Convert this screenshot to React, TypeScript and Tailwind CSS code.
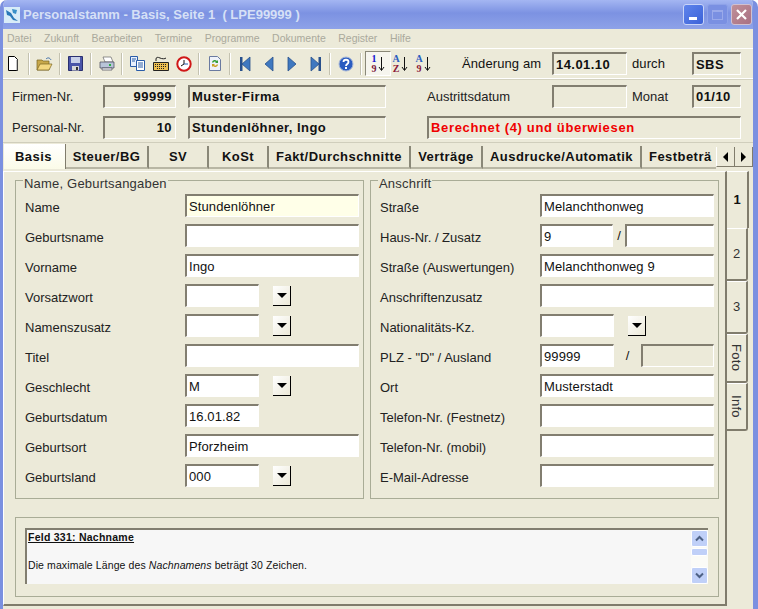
const FONT = "font-['Liberation_Sans',Arial,sans-serif]";

function Field({
  value,
  w,
  bold,
  white,
  className = "",
}: {
  value?: string;
  w: string;
  bold?: boolean;
  white?: boolean;
  className?: string;
}) {
  return (
    <div
      className={`${w} h-[23px] flex items-center pl-[2px] border-t-2 border-l-2 border-t-[#827e70] border-l-[#827e70] border-b border-r border-b-white border-r-white text-[13px] leading-none overflow-hidden whitespace-nowrap ${
        white ? "bg-white" : ""
      } ${bold ? "font-bold tracking-[0.45px]" : "tracking-[0.1px]"} ${className}`}
    >
      {value}
    </div>
  );
}

function DropBtn() {
  return (
    <div className="ml-[14px] w-[18px] h-[20px] mt-[1px] flex items-center justify-center bg-linear-to-br from-white to-[#ece9d8] border-r border-b border-r-black border-b-black">
      <div className="w-0 h-0 border-l-[5px] border-r-[5px] border-t-[5px] border-l-transparent border-r-transparent border-t-black" />
    </div>
  );
}

type Row = {
  label: string;
  value?: string;
  kind?: "wide" | "short" | "drop" | "yellow" | "haus" | "plz";
};

const leftRows: Row[] = [
  { label: "Name", value: "Stundenlöhner", kind: "yellow" },
  { label: "Geburtsname" },
  { label: "Vorname", value: "Ingo" },
  { label: "Vorsatzwort", kind: "drop" },
  { label: "Namenszusatz", kind: "drop" },
  { label: "Titel" },
  { label: "Geschlecht", value: "M", kind: "drop" },
  { label: "Geburtsdatum", value: "16.01.82", kind: "short" },
  { label: "Geburtsort", value: "Pforzheim" },
  { label: "Geburtsland", value: "000", kind: "drop" },
];

const rightRows: Row[] = [
  { label: "Straße", value: "Melanchthonweg" },
  { label: "Haus-Nr. / Zusatz", value: "9", kind: "haus" },
  { label: "Straße (Auswertungen)", value: "Melanchthonweg 9" },
  { label: "Anschriftenzusatz" },
  { label: "Nationalitäts-Kz.", kind: "drop" },
  { label: 'PLZ - "D" / Ausland', value: "99999", kind: "plz" },
  { label: "Ort", value: "Musterstadt" },
  { label: "Telefon-Nr. (Festnetz)" },
  { label: "Telefon-Nr. (mobil)" },
  { label: "E-Mail-Adresse" },
];

function FormRow({ row }: { row: Row }) {
  const kind = row.kind ?? "wide";
  return (
    <div className="flex h-[23px] items-center">
      <div className="w-[160px] pt-[5px] text-[13px] text-[#222] whitespace-nowrap">{row.label}</div>
      {kind === "wide" && <Field w="w-[174px]" value={row.value} white />}
      {kind === "yellow" && <Field w="w-[174px]" value={row.value} className="bg-[#ffffe8]" />}
      {kind === "short" && <Field w="w-[74px]" value={row.value} white />}
      {kind === "drop" && (
        <>
          <Field w="w-[74px]" value={row.value} white />
          <DropBtn />
        </>
      )}
      {kind === "haus" && (
        <>
          <Field w="w-[73px]" value={row.value} white />
          <span className="w-[12px] text-center text-[13px]">/</span>
          <Field w="w-[89px]" white />
        </>
      )}
      {kind === "plz" && (
        <>
          <Field w="w-[74px]" value={row.value} white />
          <span className="w-[27px] text-center text-[13px]">/</span>
          <Field w="w-[73px]" />
        </>
      )}
    </div>
  );
}

function Group({ title, rows, className }: { title: string; rows: Row[]; className: string }) {
  return (
    <div className={`relative h-[319px] border border-[#a9ac96] pl-[9px] pt-[13px] flex flex-col gap-[7px] ${className}`}>
      <div className="absolute left-[7px] -top-[5px] bg-[#ecead9] px-[1px] text-[13px] leading-[15px] tracking-[0.2px] text-[#333]">
        {title}
      </div>
      {rows.map((r) => (
        <FormRow key={r.label} row={r} />
      ))}
    </div>
  );
}

const tabs = [
  { label: "Steuer/BG", w: "w-[83px]" },
  { label: "SV", w: "w-[60px]" },
  { label: "KoSt", w: "w-[60px]" },
  { label: "Fakt/Durchschnitte", w: "w-[142px]" },
  { label: "Verträge", w: "w-[72px]" },
  { label: "Ausdrucke/Automatik", w: "w-[159px]" },
];

function Sep() {
  return <div className="mx-[3px] w-[2px] h-[22px] bg-[#c4c2b0] border-r border-r-white" />;
}

function Btn({ children }: { children: React.ReactNode }) {
  return <div className="w-[23px] h-[24px] flex items-center justify-center">{children}</div>;
}

function Nav({ dir, bar }: { dir: "l" | "r"; bar?: boolean }) {
  return (
    <svg width="12" height="16" viewBox="0 0 12 16">
      {dir === "l" ? (
        <path d="M10 1v14L2 8z" fill="#3f78c0" stroke="#28508c" strokeWidth="0.8" />
      ) : (
        <path d="M2 1v14l8-7z" fill="#3f78c0" stroke="#28508c" strokeWidth="0.8" />
      )}
      {bar && <rect x={dir === "l" ? 0 : 9.5} y="1" width="2.5" height="14" fill="#28508c" />}
    </svg>
  );
}

function SortIcon({ top, bottom, topColor, botColor }: { top: string; bottom: string; topColor: string; botColor: string }) {
  return (
    <div className="flex items-center">
      <div className="flex flex-col items-center text-[10px] leading-[10px] font-bold font-['Liberation_Serif',serif]">
        <span style={{ color: topColor }}>{top}</span>
        <span style={{ color: botColor }}>{bottom}</span>
      </div>
      <svg width="7" height="16" viewBox="0 0 7 16" className="ml-[1px]">
        <path d="M3.500 1v13M1 11l2.500 3.500L6 11" stroke="#111" fill="none" />
      </svg>
    </div>
  );
}

function Toolbar() {
  return (
    <div className="h-[30px] flex items-center border-b border-b-white">
      <div className="w-[19px] flex justify-center">
        <svg width="12" height="15" viewBox="0 0 12 15">
          <path d="M1.500.5h6l3 3v11h-9z" fill="#fff" stroke="#000" />
          <path d="M10 14.500V4" stroke="#8a8a8a" />
        </svg>
      </div>
      <div className="ml-[3px]" />
      <Sep />
      <Btn>
        <svg width="17" height="14" viewBox="0 0 17 14">
          <path d="M1 3h5l1 1h6v9H1z" fill="#c8a84a" stroke="#7a6420" strokeWidth="0.7" />
          <path d="M1 13l3-6h12l-3 6z" fill="#f4d880" stroke="#7a6420" strokeWidth="0.7" />
          <path d="M10 2c2-2 4-1 5 1" stroke="#3c6ca8" fill="none" />
        </svg>
      </Btn>
      <Sep />
      <Btn>
        <svg width="15" height="15" viewBox="0 0 15 15">
          <path d="M.5.5h14v14H.5z" fill="#4a55a8" stroke="#2a3070" />
          <rect x="3" y="1" width="9" height="6" fill="#c8d0e8" />
          <rect x="4" y="10" width="7" height="4.500" fill="#d8d8d8" />
          <rect x="8" y="11" width="2" height="3" fill="#333" />
        </svg>
      </Btn>
      <Sep />
      <Btn>
        <svg width="16" height="15" viewBox="0 0 16 15">
          <path d="M4 1h8l2 5H6z" fill="#fff" stroke="#666" strokeWidth="0.7" />
          <path d="M1 6h14v6H1z" fill="#b8c4d8" stroke="#445" strokeWidth="0.7" />
          <path d="M3 12h10v2H3z" fill="#fff" stroke="#445" strokeWidth="0.7" />
          <rect x="10" y="8" width="2" height="2" fill="#28b040" />
        </svg>
      </Btn>
      <Sep />
      <Btn>
        <svg width="15" height="15" viewBox="0 0 15 15">
          <path d="M.5.5h7v10h-7z" fill="#e8f0fc" stroke="#2a5ca8" />
          <path d="M6.500 4.500h8v10h-8z" fill="#fff" stroke="#2a5ca8" />
          <path d="M8 7h5M8 9h5M8 11h5" stroke="#2a5ca8" />
          <path d="M2 3h4M2 5h3" stroke="#2a5ca8" />
        </svg>
      </Btn>
      <Btn>
        <svg width="16" height="15" viewBox="0 0 16 15">
          <path d="M3 5V3c0-2 2-2 4-1s5 1 6 0" stroke="#222" fill="none" />
          <path d="M.5 6.500h15v8H.5z" fill="#eec050" stroke="#222" />
          <path d="M2 8.500h12M2 10.500h12M4 12.500h8" stroke="#222" strokeDasharray="1 1" />
        </svg>
      </Btn>
      <Btn>
        <svg width="16" height="16" viewBox="0 0 16 16">
          <circle cx="8" cy="8" r="6.700" fill="#fff" stroke="#d01818" strokeWidth="2" />
          <path d="M8 4v4l-3 2" stroke="#111" fill="none" />
          <path d="M8 8h4" stroke="#2a5ca8" />
        </svg>
      </Btn>
      <Sep />
      <Btn>
        <svg width="12" height="15" viewBox="0 0 12 15">
          <path d="M.5.5h8l3 3v11H.5z" fill="#eef2fa" stroke="#6a7aa0" />
          <path d="M3 6a3 3 0 0 1 5-1l1-1v3H6l1-1a2 2 0 0 0-3 1z" fill="#38a038" />
          <path d="M9 9a3 3 0 0 1-5 1l-1 1V8h3l-1 1a2 2 0 0 0 3-1z" fill="#c8a020" />
        </svg>
      </Btn>
      <Sep />
      <Btn>
        <Nav dir="l" bar />
      </Btn>
      <Btn>
        <Nav dir="l" />
      </Btn>
      <Btn>
        <Nav dir="r" />
      </Btn>
      <Btn>
        <Nav dir="r" bar />
      </Btn>
      <Sep />
      <Btn>
        <svg width="16" height="16" viewBox="0 0 16 16">
          <circle cx="8" cy="8" r="7" fill="#2a5cc0" stroke="#a8b8d8" />
          <path d="M5.500 6c0-3 5-3 5 0 0 2-2.500 2-2.500 4" stroke="#fff" strokeWidth="1.800" fill="none" />
          <rect x="7" y="11" width="2" height="2" fill="#fff" />
        </svg>
      </Btn>
      <Sep />
      <div className="w-[26px] h-[25px] flex items-center justify-center border-t border-l border-t-[#8a8878] border-l-[#8a8878] border-b border-r border-b-white border-r-white bg-[#f6f5ee]">
        <SortIcon top="1" bottom="9" topColor="#1010d0" botColor="#7a1838" />
      </div>
      <div className="w-[18px] flex justify-center">
        <SortIcon top="A" bottom="Z" topColor="#2a5cc0" botColor="#8a1838" />
      </div>
      <div className="w-[28px] flex justify-center">
        <SortIcon top="A" bottom="9" topColor="#2a5cc0" botColor="#8a1838" />
      </div>
      <span className="ml-[25px] w-[90px] text-[13px] tracking-[0.1px] whitespace-nowrap">Änderung am</span>
      <Field w="w-[75px]" value="14.01.10" bold className="pl-[1px]" />
      <span className="ml-[5px] w-[60px] text-[13px] tracking-[0.1px]">durch</span>
      <Field w="w-[49px]" value="SBS" bold className="pl-[1px]" />
    </div>
  );
}

export default function App() {
  return (
    <div className={`${FONT} w-[758px] h-[609px] overflow-hidden bg-white text-[#111]`}>
      <div className="h-full bg-[#ecead9] border-l-[3px] border-r-[5px] border-l-[#7b90e0] border-r-[#7b90e0] rounded-t-[7px] overflow-hidden flex flex-col">
        {/* TITLE BAR */}
        <div className="h-[29px] shrink-0 -ml-[3px] -mr-[5px] flex items-center bg-[linear-gradient(to_bottom,#a4b6f2,#7c92e2_45%,#8ea2e8)] pl-[4px] pr-[6px]">
          <svg width="16" height="16" viewBox="0 0 16 16">
            <rect width="16" height="16" fill="#d8ecf8" />
            <path d="M2 3l5 3 3 5 4 3-5-1-3-4-3-1z" fill="#2a78b8" />
            <path d="M8 2l5 1-1 4-3-1z" fill="#3a90c8" />
          </svg>
          <span className="ml-[3px] text-[13px] font-bold text-[#d6e0f6] whitespace-pre">
            {"Personalstamm - Basis, Seite 1  ( LPE99999 )"}
          </span>
          <div className="ml-auto flex gap-[3px]">
            <div className="w-[21px] h-[21px] rounded-[3px] border border-[#c8d4f8] bg-linear-to-br from-[#5f84ec] to-[#3c62d8] flex items-end pl-[5px] pb-[4px]">
              <div className="w-[8px] h-[3px] bg-white" />
            </div>
            <div className="w-[21px] h-[21px] rounded-[3px] border border-[#8ea2e8] bg-[#7a90e2] flex items-center justify-center">
              <div className="w-[11px] h-[10px] border border-[#9aaaea] border-t-2" />
            </div>
            <div className="w-[21px] h-[21px] rounded-[3px] border border-[#d0c0d0] bg-linear-to-br from-[#c09098] to-[#a87084] flex items-center justify-center">
              <svg width="13" height="13" viewBox="0 0 13 13">
                <path d="M2 2l9 9M11 2l-9 9" stroke="#fff" strokeWidth="2.200" />
              </svg>
            </div>
          </div>
        </div>

        {/* MENU */}
        <div className="h-[20px] shrink-0 flex items-center gap-[12.500px] pl-[4px] text-[10.500px] text-[#aaa99c] border-b border-b-white">
          {["Datei", "Zukunft", "Bearbeiten", "Termine", "Programme", "Dokumente", "Register", "Hilfe"].map((m) => (
            <span key={m}>{m}</span>
          ))}
        </div>

        <Toolbar />

        {/* HEADER FIELDS */}
        <div className="h-[64px] shrink-0 pt-[5px] pl-[9px] flex flex-col gap-[8px] border-t border-t-[#d4d2c0] border-b border-b-[#d0cebc]">
          <div className="flex items-center h-[23px]">
            <span className="w-[91px] text-[13px] text-[#222]">Firmen-Nr.</span>
            <Field w="w-[73px]" value="99999" bold className="justify-end pr-[3px] pb-[2px]" />
            <Field w="w-[198px]" value="Muster-Firma" bold className="ml-[12px] pb-[2px]" />
            <span className="ml-[41px] w-[125px] text-[13px] text-[#222]">Austrittsdatum</span>
            <Field w="w-[75px]" />
            <span className="ml-[5px] w-[60px] text-[13px] text-[#222]">Monat</span>
            <Field w="w-[49px]" value="01/10" bold className="pl-[1px] pb-[2px]" />
          </div>
          <div className="flex items-center h-[23px]">
            <span className="w-[91px] text-[13px] text-[#222]">Personal-Nr.</span>
            <Field w="w-[73px]" value="10" bold className="justify-end pr-[3px] pb-[2px]" />
            <Field w="w-[198px]" value="Stundenlöhner, Ingo" bold className="ml-[12px] pb-[2px]" />
            <Field w="w-[314px]" value="Berechnet (4) und überwiesen" bold className="ml-[41px] pb-[2px] text-[#f00000] tracking-[0.65px]" />
          </div>
        </div>

        {/* TABS */}
        <div className="h-[28px] shrink-0 pt-[1px] flex items-start text-[13px] font-bold tracking-[0.45px]">
          <div className="w-[62px] h-[25px] ml-[1px] pl-[11px] flex items-center bg-linear-to-b from-white to-[#fbfbe8] border-r border-r-[#807c6c]">
            Basis
          </div>
          {tabs.map((t) => (
            <div key={t.label} className={`${t.w} h-[23px] mt-[2px] flex items-center justify-center border-r-2 border-b-2 border-r-[#8a8878] border-b-[#b8b6a4] whitespace-nowrap`}>
              {t.label}
            </div>
          ))}
          <div className="w-[74px] h-[23px] mt-[2px] pl-[7px] flex items-center overflow-hidden whitespace-nowrap border-b-2 border-b-[#b8b6a4]">
            Festbeträ
          </div>
          <div className="flex mt-[3px]">
            <div className="w-[19px] h-[20px] flex items-center justify-center border-r border-b border-r-[#807c6c] border-b-[#807c6c] border-l border-l-white">
              <div className="w-0 h-0 border-t-[5px] border-b-[5px] border-r-[5px] border-t-transparent border-b-transparent border-r-black" />
            </div>
            <div className="w-[18px] h-[20px] flex items-center justify-center border-r border-b border-r-[#807c6c] border-b-[#807c6c]">
              <div className="w-0 h-0 border-t-[5px] border-b-[5px] border-l-[5px] border-t-transparent border-b-transparent border-l-black" />
            </div>
          </div>
        </div>

        {/* BODY */}
        <div className="flex flex-1 min-h-0 items-start">
          <div className="w-[724px] h-[435px] shrink-0 border-t border-t-white border-l border-l-white border-r-2 border-r-[#807c6c] border-b-2 border-b-[#807c6c] pl-[11px] pt-[8px]">
            <div className="flex gap-[6px]">
              <Group title="Name, Geburtsangaben" rows={leftRows} className="w-[349px]" />
              <Group title="Anschrift" rows={rightRows} className="w-[349px]" />
            </div>
            <div className="mt-[18px] w-[704px] h-[80px] border border-[#a9ac96] pl-[9px] pt-[10px]">
              <div className="w-[683px] h-[56px] flex border-t-2 border-l-2 border-t-[#827e70] border-l-[#827e70] bg-[#f7f7f7]">
                <div className="flex-1 pl-[1px] text-[10.500px] leading-[12px] text-[#111]">
                  <div className="mt-[1px] font-bold underline tracking-[0.25px]">Feld 331: Nachname</div>
                  <div className="mt-[16px] tracking-[0.1px]">
                    Die maximale Länge des <em className="italic">Nachnamens</em> beträgt 30 Zeichen.
                  </div>
                </div>
                <div className="w-[17px] flex flex-col gap-[1px] bg-[#fbfbf7]">
                  <div className="h-[17px] rounded-[2px] border border-white bg-[#c0d0f8] flex items-center justify-center">
                    <svg width="9" height="7" viewBox="0 0 9 7">
                      <path d="M1 5.500l3.500-3.500L8 5.500" stroke="#4d6185" strokeWidth="2" fill="none" />
                    </svg>
                  </div>
                  <div className="h-[8px] rounded-[2px] border border-white bg-[#c0d0f8]" />
                  <div className="flex-1" />
                  <div className="h-[17px] rounded-[2px] border border-white bg-[#c0d0f8] flex items-center justify-center">
                    <svg width="9" height="7" viewBox="0 0 9 7">
                      <path d="M1 1.500L4.500 5 8 1.500" stroke="#4d6185" strokeWidth="2" fill="none" />
                    </svg>
                  </div>
                </div>
              </div>
            </div>
          </div>

          {/* SIDE TABS */}
          <div className="w-[23px] shrink-0 text-[13px] text-[#333]">
            <div className="h-[57px] w-[22px] flex items-center justify-center font-bold text-[#111] border-r-2 border-r-[#807c6c] border-t border-t-white">
              1
            </div>
            {[
              { label: "2", h: "h-[53px]", vertical: false },
              { label: "3", h: "h-[53px]", vertical: false },
              { label: "Foto", h: "h-[49px]", vertical: true },
              { label: "Info", h: "h-[48px]", vertical: true },
            ].map((t) => (
              <div key={t.label} className={`${t.h} w-[21px] flex items-center justify-center border-r-2 border-b-2 border-r-[#807c6c] border-b-[#807c6c] border-t border-t-white rounded-br-[3px]`}>
                <span className={t.vertical ? "[writing-mode:vertical-rl] tracking-[0.3px]" : ""}>{t.label}</span>
              </div>
            ))}
          </div>
        </div>
      </div>
    </div>
  );
}
